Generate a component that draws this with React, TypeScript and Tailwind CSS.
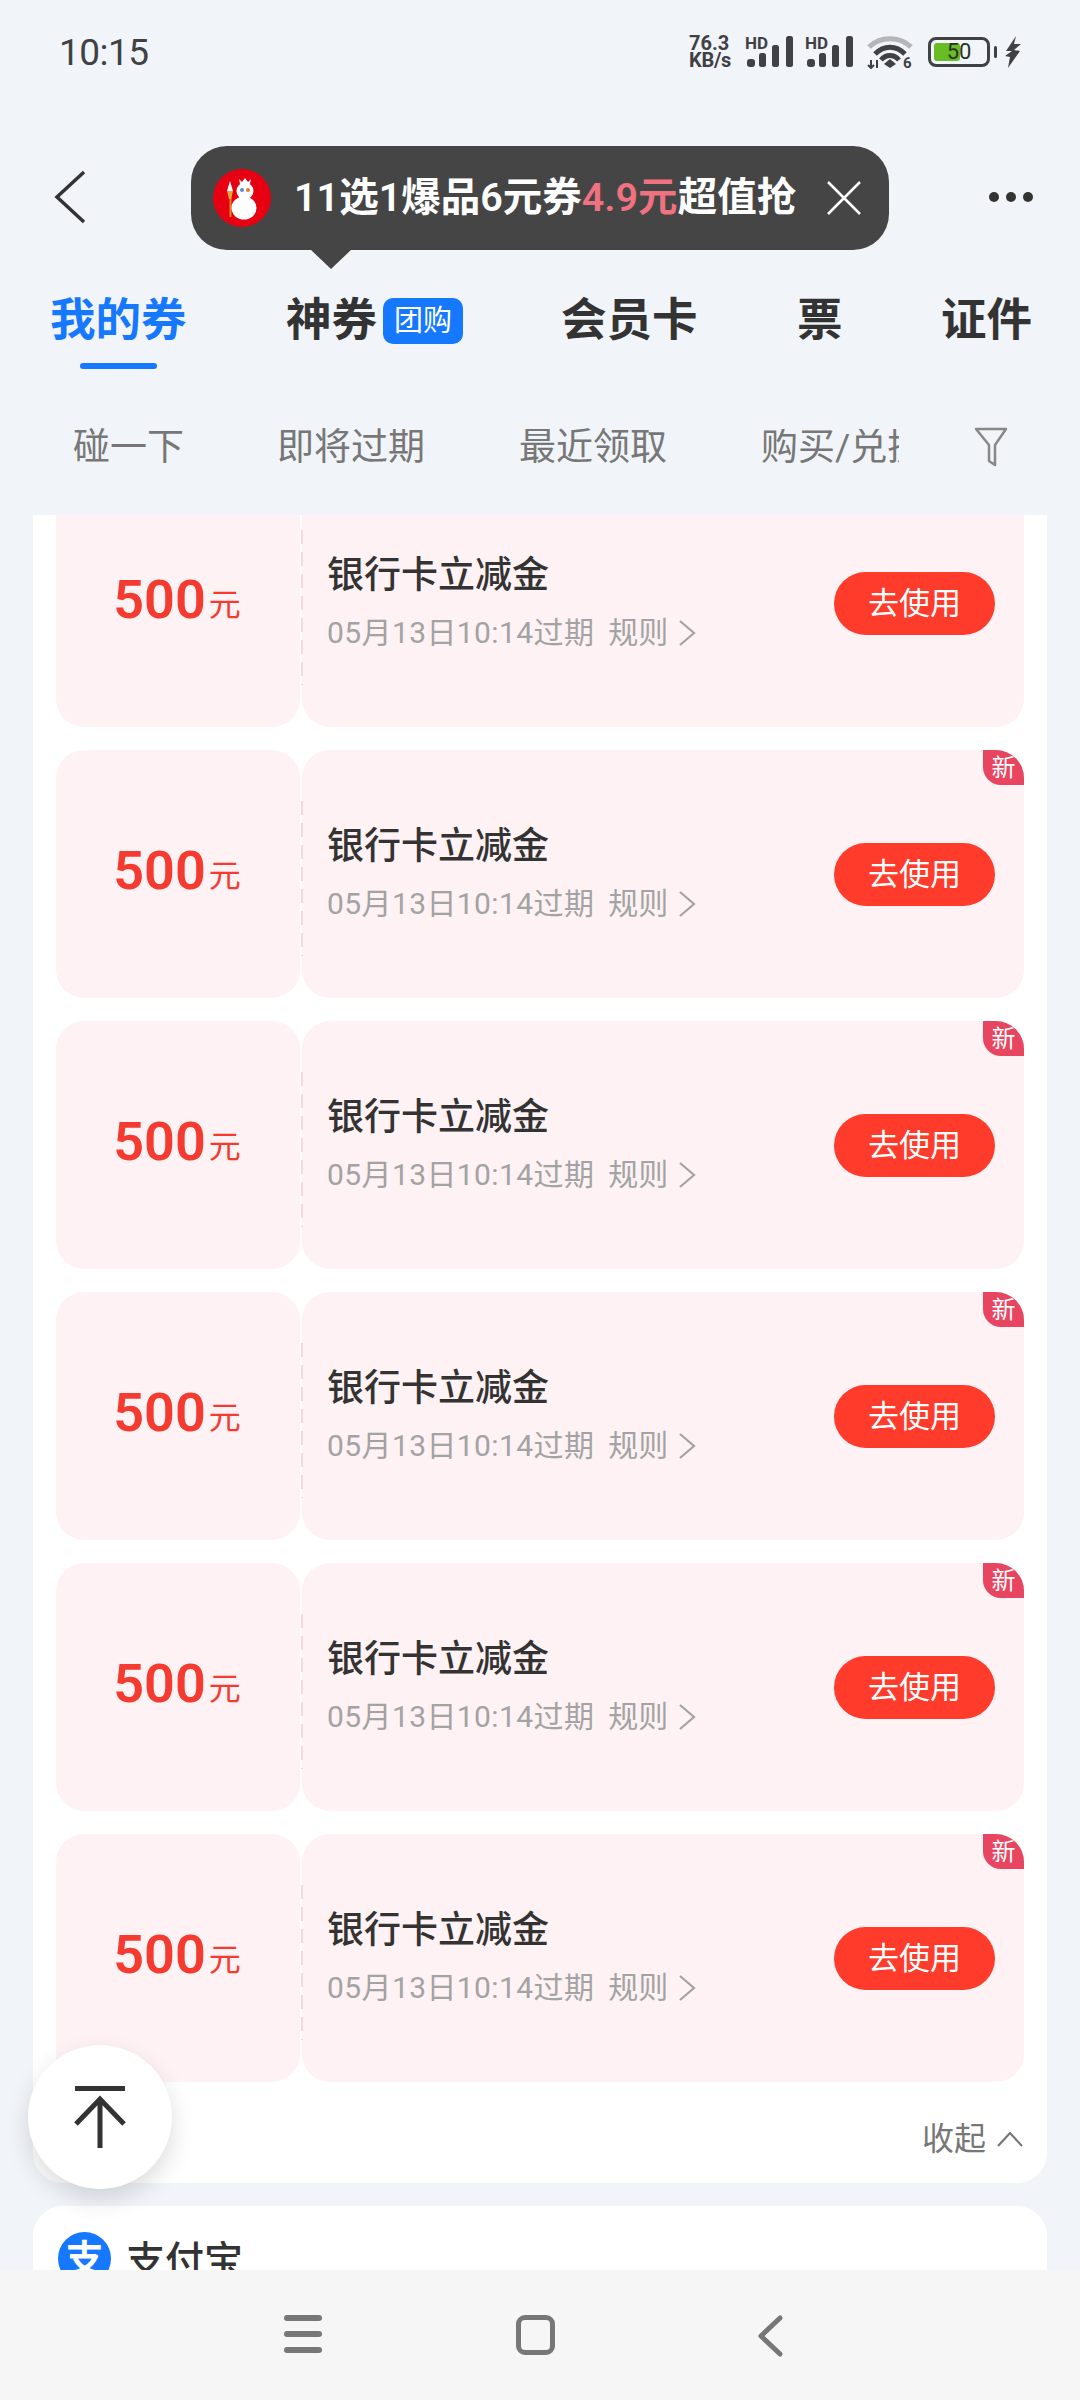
const cjk = "font-['Roboto','Noto_Sans_CJK_SC',sans-serif]";

function Bars() {
  return (
    <div className="relative h-[32px] w-[48px]">
      <span className="absolute left-0 top-0 text-[17px] font-bold leading-[14px] text-[#3f4145]">HD</span>
      <svg width="48" height="32" viewBox="0 0 48 32" className="absolute left-0 top-0">
        <rect x="2" y="23" width="8" height="8" rx="3" fill="#3f4145" />
        <rect x="14" y="17" width="7" height="14" rx="2.5" fill="#3f4145" />
        <rect x="27" y="9" width="7" height="22" rx="2.5" fill="#3f4145" />
        <rect x="41" y="0" width="7" height="31" rx="2.5" fill="#3f4145" />
      </svg>
    </div>
  );
}

function StatusBar() {
  return (
    <div className="flex h-[100px] items-center justify-between pl-[59px] pr-[58px] pt-[4px] text-[#3f4145]">
      <span className="text-[37px] leading-none tracking-[-0.5px]">10:15</span>
      <div className="flex items-center">
        <div className="flex w-[50px] flex-col text-[20px] font-bold leading-[17px]">
          <span>76.3</span>
          <span className="tracking-[-0.3px]">KB/s</span>
        </div>
        <div className="ml-[6px]"><Bars /></div>
        <div className="ml-[12px]"><Bars /></div>
        <svg width="46" height="34" viewBox="0 0 46 34" className="ml-[14px]">
          <path d="M2 12 C13 1 33 1 44 12" fill="none" stroke="#b4b6b9" strokeWidth="5" />
          <path d="M8 19 C17 10 29 10 38 19" fill="none" stroke="#3f4145" strokeWidth="5" />
          <path d="M14 25 C19 19 27 19 32 25" fill="none" stroke="#3f4145" strokeWidth="5" />
          <path d="M23 24 L29 29 L23 33 L17 29 Z" fill="#3f4145" />
          <path d="M4 25 V33 M1 30 L4 33 L7 30 M10 33 V25" fill="none" stroke="#3f4145" strokeWidth="2" />
          <text x="36" y="33" fontSize="15" fontWeight="700" fill="#3f4145">6</text>
        </svg>
        <div className="relative ml-[15px] h-[30px] w-[62px] rounded-[8px] border-[3px] border-[#3f4145] p-[3px]">
          <div className="h-full w-[26px] rounded-[3px] bg-[#68bd25]" />
          <span className="absolute inset-0 flex items-center justify-center text-[22px] leading-none text-[#27331e]">50</span>
        </div>
        <div className="ml-[4px] h-[12px] w-[3px] rounded-full bg-[#3f4145]" />
        <svg width="18" height="32" viewBox="0 0 18 32" className="ml-[7px]">
          <path d="M12 0 L2 15 L8 15 L1 20 L6 21 L4 32 L16 15 L10 14 L17 8 L10 8 Z" fill="#3f4145" />
        </svg>
      </div>
    </div>
  );
}

function Snowman() {
  return (
    <svg width="58" height="58" viewBox="0 0 58 58" className="shrink-0">
      <circle cx="29" cy="29" r="29" fill="#e60012" />
      <path d="M17 12 L20 22 H14 Z" fill="#fff" />
      <rect x="16.5" y="22" width="2" height="26" fill="#d98a1e" />
      <path d="M14 22 H20 L18 30 H16 Z" fill="#e9a53a" />
      <path d="M26 10 L29 13 L32 9 L35 13 L38 10 L37 15 H27 Z" fill="#fff" />
      <circle cx="32" cy="22" r="8.5" fill="#fff" />
      <circle cx="29" cy="21" r="2" fill="#5b8bd6" />
      <circle cx="35" cy="21" r="2" fill="#e87b2f" />
      <ellipse cx="31" cy="39" rx="12.5" ry="11.5" fill="#fff" />
    </svg>
  );
}

function Tooltip() {
  return (
    <div className="absolute left-[191px] top-[146px] z-10 flex h-[104px] w-[698px] items-center rounded-[36px] bg-[#454546] pl-[22px]">
      <Snowman />
      <span className="ml-[23px] w-[511px] whitespace-nowrap text-[39.5px] font-semibold leading-none text-white">
        11选1爆品6元券<span className="text-[#f0717f]">4.9元</span>超值抢
      </span>
      <svg width="36" height="36" viewBox="0 0 36 36" className="ml-[21px]">
        <path d="M2 2 L34 34 M34 2 L2 34" stroke="#fff" strokeWidth="2.5" />
      </svg>
      <div className="absolute left-[119px] top-[103px] h-0 w-0 border-x-[21px] border-t-[20px] border-x-transparent border-t-[#454546]" />
    </div>
  );
}

function NavRow() {
  return (
    <div className="flex h-[96px] items-center justify-between pl-[54px] pr-[47px]">
      <svg width="32" height="54" viewBox="0 0 32 54">
        <path d="M30 2 L3 27 L30 52" fill="none" stroke="#333" strokeWidth="3.5" />
      </svg>
      <div className="flex gap-[7px]">
        <span className="h-[10px] w-[10px] rounded-full bg-[#333]" />
        <span className="h-[10px] w-[10px] rounded-full bg-[#333]" />
        <span className="h-[10px] w-[10px] rounded-full bg-[#333]" />
      </div>
    </div>
  );
}

function Tabs() {
  return (
    <div className="relative mt-[52px] flex h-[72px] items-start whitespace-nowrap pl-[50px] text-[45.5px] font-semibold leading-[48px] text-[#333]">
      <div className="flex w-[236px] flex-col">
        <span className="text-[#1677ff]">我的券</span>
        <span className="ml-[30px] mt-[18px] h-[6px] w-[77px] rounded-full bg-[#1677ff]" />
      </div>
      <div className="flex w-[275px] items-center">
        <span>神券</span>
        <span className="ml-[6px] flex h-[46px] w-[80px] items-center justify-center rounded-[10px] bg-[#1677ff] text-[29px] font-normal leading-none text-white">团购</span>
      </div>
      <span className="w-[236px]">会员卡</span>
      <span className="w-[144px]">票</span>
      <span>证件</span>
    </div>
  );
}

function SubTabs() {
  return (
    <div className="mt-[43px] flex h-[70px] items-center pl-[73px] text-[37px] leading-none text-[#777]">
      <span className="w-[204px] whitespace-nowrap">碰一下</span>
      <span className="w-[242px] whitespace-nowrap">即将过期</span>
      <span className="w-[242px] whitespace-nowrap">最近领取</span>
      <span className="w-[138px] overflow-hidden whitespace-nowrap">购买/兑换</span>
      <svg width="34" height="40" viewBox="0 0 34 40" className="ml-[75px]">
        <path d="M2 2 H32 L21 18 V38 L15 34 V18 Z" fill="none" stroke="#888" strokeWidth="2.5" strokeLinejoin="round" />
      </svg>
    </div>
  );
}

function Coupon({ isNew }: { isNew: boolean }) {
  return (
    <div className="flex h-[248px] gap-[2px]">
      <div className="flex w-[244px] items-center justify-center rounded-[28px] bg-[#fef2f4] pb-[7px] pr-[2px] text-[#f53b30]">
        <span className="text-[54px] font-semibold leading-none">500</span>
        <span className="ml-[3px] mt-[10px] text-[32px] leading-none">元</span>
      </div>
      <div className="relative flex flex-1 items-center rounded-[28px] bg-[#fef2f4] pl-[25px] pr-[29px]">
        <div className="absolute bottom-[42px] left-[-1px] top-[51px] w-[2px] bg-[repeating-linear-gradient(to_bottom,#f7d7de_0,#f7d7de_14px,transparent_14px,transparent_22px)]" />
        {isNew && (
          <span className="absolute right-0 top-0 flex h-[35px] w-[41px] items-center justify-center rounded-bl-[18px] rounded-tr-[28px] bg-[#e84560] text-[24px] leading-none text-white">新</span>
        )}
        <div className="flex-1">
          <div className="text-[37px] font-medium leading-[44px] text-[#333]">银行卡立减金</div>
          <div className="mt-[15px] flex items-center text-[30px] leading-[40px] text-[#a3a3a3]">
            <span className="tracking-[0.4px]">05月13日10:14过期</span>
            <span className="ml-[14px]">规则</span>
            <svg width="18" height="28" viewBox="0 0 18 28" className="ml-[10px]">
              <path d="M2 2 L16 14 L2 26" fill="none" stroke="#a3a3a3" strokeWidth="2.2" />
            </svg>
          </div>
        </div>
        <button className="flex h-[63px] w-[161px] items-center justify-center rounded-full bg-[#ff3b2c] text-[31px] leading-none text-white">去使用</button>
      </div>
    </div>
  );
}

function BottomNav() {
  return (
    <div className="flex h-[130px] shrink-0 items-start bg-[#f6f6f6] pl-[284px] pt-[45px]">
      <div className="flex h-[38px] w-[38px] flex-col justify-between">
        <span className="h-[6px] rounded-full bg-[#777]" />
        <span className="h-[6px] rounded-full bg-[#777]" />
        <span className="h-[6px] rounded-full bg-[#777]" />
      </div>
      <div className="ml-[194px] h-[40px] w-[39px] rounded-[9px] border-[5px] border-[#777]" />
      <svg width="26" height="42" viewBox="0 0 26 42" className="ml-[202px]">
        <path d="M23 3 L4 21 L23 39" fill="none" stroke="#777" strokeWidth="5" strokeLinecap="round" strokeLinejoin="round" />
      </svg>
    </div>
  );
}

export default function App() {
  return (
    <div className={`relative flex h-[2400px] w-[1080px] flex-col overflow-hidden bg-[#f1f4f9] ${cjk}`}>
      <StatusBar />
      <div className="h-[49px]" />
      <NavRow />
      <Tabs />
      <SubTabs />
      <Tooltip />

      <div className="h-[33px]" />
      <div className="min-h-0 flex-1 overflow-hidden px-[33px]">
        <div className="rounded-b-[30px] bg-white px-[23px] pb-[26px]">
          <div className="mt-[-36px] flex flex-col gap-[23px]">
            <Coupon isNew={false} />
            <Coupon isNew />
            <Coupon isNew />
            <Coupon isNew />
            <Coupon isNew />
            <Coupon isNew />
          </div>
          <div className="mt-[39px] flex items-center justify-end text-[32px] leading-[36px] text-[#777]">
            <span>收起</span>
            <svg width="28" height="18" viewBox="0 0 28 18" className="ml-[10px]">
              <path d="M2 16 L14 3 L26 16" fill="none" stroke="#777" strokeWidth="2.2" />
            </svg>
          </div>
        </div>
        <div className="mt-[23px] h-[200px] rounded-t-[30px] bg-white px-[25px] pt-[26px]">
          <div className="flex items-center">
            <div className="flex h-[53px] w-[53px] items-center justify-center rounded-full bg-[#1677ff] text-[38px] font-bold leading-none text-white">支</div>
            <span className="ml-[15px] mt-[6px] text-[39px] font-medium leading-none text-[#333]">支付宝</span>
          </div>
        </div>
      </div>
      <BottomNav />

      <div className="absolute left-[28px] top-[2045px] flex h-[144px] w-[144px] items-center justify-center rounded-full bg-white shadow-[0_10px_24px_rgba(0,0,0,0.14)]">
        <svg width="52" height="62" viewBox="0 0 52 62">
          <rect x="1" y="0" width="50" height="5" fill="#333" />
          <path d="M26 62 V13 M2 38 L26 13 L50 38" fill="none" stroke="#333" strokeWidth="5" />
        </svg>
      </div>
    </div>
  );
}
